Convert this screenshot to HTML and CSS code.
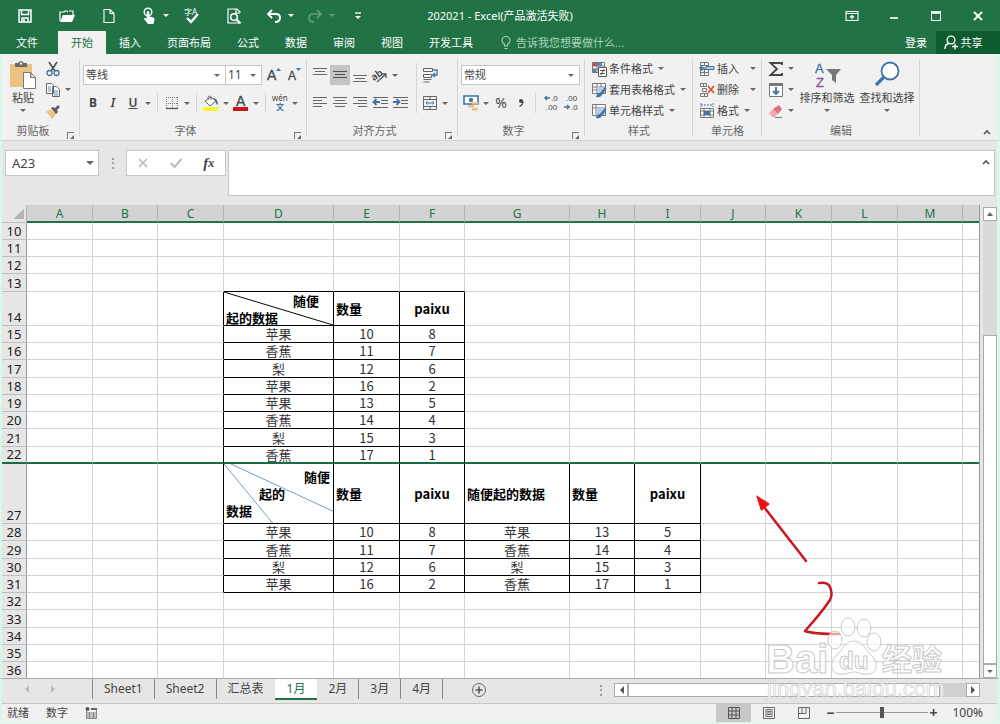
FILE: index.html
```html
<!DOCTYPE html>
<html lang="zh-CN">
<head>
  <meta charset="UTF-8">
  <meta name="viewport" content="width=device-width, initial-scale=1.0">
  <title>202021 - Excel</title>
  <link rel="stylesheet" href="styles.css">
</head>
<body>
  <header class="titlebar">
    <div class="quick">
      <button class="q" aria-label="保存"><svg width="16" height="16" viewBox="0 0 16 16"><path d="M2 2h12v12H2z M4.500 2v4.500h7V2 M5 14v-4h6v4 M7 11v3" fill="none" stroke="#fff" stroke-width="1.500"/></svg></button>
      <button class="q" aria-label="打开"><svg width="18" height="16" viewBox="0 0 18 16"><path d="M2 13V4h4l1-1h2l1 1M11 3h4v4" fill="none" stroke="#fff" stroke-width="1.200"/><path d="M2 14l3-7h12l-3 7z" fill="#fff"/></svg></button>
      <button class="q" aria-label="新建"><svg width="14" height="16" viewBox="0 0 14 16"><path d="M2 1.500h6l4 4v9H2z M8 1.500v4h4" fill="none" stroke="#fff" stroke-width="1.100"/></svg></button>
      <button class="q split" aria-label="触摸模式"><svg width="14" height="18" viewBox="0 0 14 18"><circle cx="6" cy="5" r="3.800" fill="none" stroke="#fff" stroke-width="1.400"/><path d="M4.700 5q1.300-2 2.600 0v4.500l4 1q1.700.500 1.200 2.500l-1 4H6l-4-5q0-1.500 1.500-1L4.700 12z" fill="#fff"/></svg></button>
      <button class="drop light" aria-label="更多"></button>
      <button class="q" aria-label="拼写检查"><svg width="18" height="18" viewBox="0 0 18 18"><text x="1" y="8" class="mini white">字A</text><path d="M4 11l4 4 7-8" fill="none" stroke="#fff" stroke-width="2.400"/></svg></button>
      <button class="q" aria-label="打印预览"><svg width="16" height="18" viewBox="0 0 16 18"><path d="M14 6V5l-3-3H2v14h11M10 2v4h4" fill="none" stroke="#fff" stroke-width="1.200"/><circle cx="8" cy="10" r="3.300" fill="none" stroke="#fff" stroke-width="1.500"/><path d="M10.500 12.500l4 4" stroke="#fff" stroke-width="2.200"/></svg></button>
      <button class="q split" aria-label="撤消"><svg width="16" height="14" viewBox="0 0 16 14"><path d="M2 5h8q4 0 4 4t-5 4M6 1L2 5l4 4" fill="none" stroke="#fff" stroke-width="1.900"/></svg></button>
      <button class="drop light" aria-label="撤消列表"></button>
      <button class="q split faded" aria-label="恢复"><svg width="16" height="14" viewBox="0 0 16 14"><path d="M14 5H6q-4 0-4 4t5 4M10 1l4 4-4 4" fill="none" stroke="#fff" stroke-width="1.700"/></svg></button>
      <button class="drop light faded" aria-label="恢复列表"></button>
      <button class="q" aria-label="自定义"><svg width="8" height="8" viewBox="0 0 8 8"><path d="M1 1h6" stroke="#fff" stroke-width="1.300"/><path d="M1 4h6L4 7z" fill="#fff"/></svg></button>
    </div>
    <h1 class="doc-name">202021 - Excel(产品激活失败)</h1>
    <div class="window-buttons">
      <button class="q" aria-label="功能区选项"><svg width="14" height="12" viewBox="0 0 14 12"><path d="M1 1.500h12v9H1zM1 3.500h12M7 9.500v-4M5 7.500l2-2 2 2" fill="none" stroke="#fff" stroke-width="1.100"/></svg></button>
      <button class="q" aria-label="最小化"><svg width="10" height="12" viewBox="0 0 10 12"><path d="M1 8h8" stroke="#fff" stroke-width="1.700"/></svg></button>
      <button class="q" aria-label="最大化"><svg width="10" height="12" viewBox="0 0 10 12"><path d="M.500 2h9v8.500h-9z" fill="none" stroke="#fff"/><path d="M0 2.500h10" stroke="#fff" stroke-width="2.500"/></svg></button>
      <button class="q" aria-label="关闭"><svg width="10" height="12" viewBox="0 0 10 12"><path d="M1 2l8 8M9 2l-8 8" stroke="#fff" stroke-width="1.900"/></svg></button>
    </div>
  </header>

  <nav class="tabs">
    <button class="tab file">文件</button>
    <button class="tab active">开始</button>
    <button class="tab">插入</button>
    <button class="tab">页面布局</button>
    <button class="tab">公式</button>
    <button class="tab">数据</button>
    <button class="tab">审阅</button>
    <button class="tab">视图</button>
    <button class="tab">开发工具</button>
    <button class="tell"><svg width="10" height="14" viewBox="0 0 10 14"><path d="M3.500 10V8.500Q1 6.500 1 4.500a4 4 0 0 1 8 0q0 2-2.500 4V10zM3.500 12.500h3" fill="none" stroke="#a9d3ba" stroke-width="1.100"/></svg>告诉我您想要做什么...</button>
    <button class="login">登录</button>
    <button class="share"><svg width="14" height="15" viewBox="0 0 14 15"><circle cx="7" cy="5" r="3.900" fill="none" stroke="#fff" stroke-width="1.300"/><path d="M1 14q0-5 4-5.500M11 8.500v6M8 11.500h6" fill="none" stroke="#fff" stroke-width="1.300"/></svg>共享</button>
  </nav>

  <section class="ribbon">
    <div class="group clipboard">
      <div class="group-body">
        <button class="big paste">
          <svg width="28" height="30" viewBox="0 0 28 30"><path d="M1 4h22v23H1z" fill="#eac282"/><path d="M6 3h3q3-4 6 0h3v4H6z" fill="#6b6b6b"/><circle cx="12" cy="3.500" r="1.200" fill="#f1f1f1"/><path d="M14.500 12.500h7l5 5v11h-12zM21.500 12.500v5h5" fill="#fff" stroke="#777"/></svg>
          <span>粘贴</span><i class="caret"></i>
        </button>
        <div class="stack">
          <button class="line" aria-label="剪切"><svg width="16" height="16" viewBox="0 0 16 16"><path d="M4 1l6 9M12 1L6 10" stroke="#555" stroke-width="1.700"/><circle cx="4.500" cy="12" r="2.500" fill="none" stroke="#3f74a8" stroke-width="1.300"/><circle cx="11.500" cy="12" r="2.500" fill="none" stroke="#3f74a8" stroke-width="1.300"/></svg></button>
          <button class="line" aria-label="复制"><svg width="16" height="16" viewBox="0 0 16 16"><path d="M1.500 1.500h5l2 2v8h-7zM7.500 4.500h4l3 3v7h-7z" fill="#fff" stroke="#666"/><path d="M3 5h3M3 7h3M3 9h3M9 9h4M9 11h4M9 13h4" stroke="#5f8fbd"/></svg><i class="caret"></i></button>
          <button class="line" aria-label="格式刷"><svg width="16" height="16" viewBox="0 0 16 16"><path d="M1 9l5-3 5 5-4 5q-2-4-6-7z" fill="#eac282"/><path d="M6 5l5 6 2-2-1-2 3-3-2-2-3 3-2-1z" fill="#5f5f5f"/></svg></button>
        </div>
      </div>
      <div class="group-name">剪贴板<button class="launch" aria-label="剪贴板设置"></button></div>
    </div>

    <div class="group font">
      <div class="group-body rows">
        <div class="tool-row">
          <label class="combo font-name"><select aria-label="字体"><option>等线</option></select></label>
          <label class="combo font-size"><select aria-label="字号"><option>11</option></select></label>
          <button class="tool" aria-label="增大字号"><svg width="16" height="16" viewBox="0 0 16 16"><text x="1" y="13" class="letter big-a">A</text><path d="M10 4h5l-2.500-3z" fill="#3f74a8"/></svg></button>
          <button class="tool" aria-label="减小字号"><svg width="16" height="16" viewBox="0 0 16 16"><text x="2" y="13" class="letter small-a">A</text><path d="M10 1h5l-2.500 3z" fill="#3f74a8"/></svg></button>
        </div>
        <div class="tool-row">
          <button class="tool bold">B</button>
          <button class="tool italic">I</button>
          <button class="tool under">U</button>
          <button class="drop" aria-label="下划线"></button>
          <span class="sep"></span>
          <button class="tool" aria-label="边框"><svg width="14" height="14" viewBox="0 0 14 14"><path d="M1.500 1v12M7.500 1v12M12.500 1v12M1 1.500h12M1 7.500h12" stroke="#777" stroke-dasharray="1 1"/><path d="M1 12.500h12" stroke="#555" stroke-width="1.300"/></svg></button>
          <button class="drop" aria-label="边框列表"></button>
          <span class="sep"></span>
          <button class="tool" aria-label="填充颜色"><svg width="16" height="16" viewBox="0 0 16 16"><path d="M2 6l6-4 5 4-6 5zM5 5V2q2-2 3 0v3" fill="#fff" stroke="#666"/><path d="M10 3q5 0 5 7-2-1-3-4z" fill="#3f74a8"/><path d="M0 12h15v4H0z" fill="#f7f431"/></svg></button>
          <button class="drop" aria-label="填充列表"></button>
          <button class="tool" aria-label="字体颜色"><svg width="16" height="16" viewBox="0 0 16 16"><text x="3" y="11" class="letter big-a">A</text><path d="M0 12h15v4H0z" fill="#c8171e"/></svg></button>
          <button class="drop" aria-label="颜色列表"></button>
          <span class="sep"></span>
          <button class="tool" aria-label="拼音"><svg width="18" height="18" viewBox="0 0 18 18"><text x="1" y="7" class="mini">wén</text><text x="5" y="16" class="mini blue">文</text></svg></button>
          <button class="drop" aria-label="拼音列表"></button>
        </div>
      </div>
      <div class="group-name">字体<button class="launch" aria-label="字体设置"></button></div>
    </div>

    <div class="group align">
      <div class="group-body">
        <div class="rows">
          <div class="tool-row">
            <button class="tool" aria-label="顶端对齐"><svg width="14" height="14" viewBox="0 0 14 14"><path d="M0 .500h14M2 3.500h10M0 6.500h14" stroke="#666"/></svg></button>
            <button class="tool on" aria-label="垂直居中"><svg width="14" height="14" viewBox="0 0 14 14"><path d="M0 3.500h14M2 6.500h10M0 9.500h14" stroke="#555"/></svg></button>
            <button class="tool" aria-label="底端对齐"><svg width="14" height="14" viewBox="0 0 14 14"><path d="M0 7.500h14M2 10.500h10M0 13.500h14" stroke="#666"/></svg></button>
            <button class="tool" aria-label="方向"><svg width="16" height="16" viewBox="0 0 16 16"><text x="0" y="11" class="mini slant">ab</text><path d="M5 15l9-8M10 7h4v4" fill="none" stroke="#555" stroke-width="1.300"/></svg></button>
            <button class="drop" aria-label="方向列表"></button>
          </div>
          <div class="tool-row">
            <button class="tool" aria-label="左对齐"><svg width="14" height="14" viewBox="0 0 14 14"><path d="M0 1.500h14M0 4.500h9M0 7.500h14M0 10.500h9" stroke="#666"/></svg></button>
            <button class="tool" aria-label="居中"><svg width="14" height="14" viewBox="0 0 14 14"><path d="M0 1.500h14M2 4.500h10M0 7.500h14M2 10.500h10" stroke="#666"/></svg></button>
            <button class="tool" aria-label="右对齐"><svg width="14" height="14" viewBox="0 0 14 14"><path d="M0 1.500h14M5 4.500h9M0 7.500h14M5 10.500h9" stroke="#666"/></svg></button>
            <button class="tool" aria-label="减少缩进"><svg width="16" height="14" viewBox="0 0 16 14"><path d="M1 1.500h15M9 4.500h7M9 7.500h7M1 11.500h15" stroke="#666"/><path d="M8 6H2M4.500 3L1.500 6l3 3" fill="none" stroke="#3f74a8" stroke-width="1.800"/></svg></button>
            <button class="tool" aria-label="增加缩进"><svg width="16" height="14" viewBox="0 0 16 14"><path d="M1 1.500h15M9 4.500h7M9 7.500h7M1 11.500h15" stroke="#666"/><path d="M1 6h6M4.500 3l3 3-3 3" fill="none" stroke="#3f74a8" stroke-width="1.800"/></svg></button>
          </div>
        </div>
        <span class="sep tall"></span>
        <div class="rows">
          <div class="tool-row">
            <button class="tool" aria-label="自动换行"><svg width="16" height="16" viewBox="0 0 16 16"><path d="M1.500 1.500h9v3h-9zM1.500 7.500h8v3h-8zM1.500 12.500h8M1.500 15h6" fill="none" stroke="#666"/><path d="M10 3h5v5h-4M13 6l-2.500 2 2.500 2" fill="none" stroke="#3f74a8" stroke-width="1.300"/></svg></button>
          </div>
          <div class="tool-row">
            <button class="tool" aria-label="合并后居中"><svg width="16" height="14" viewBox="0 0 16 14"><path d="M1.500 .500h13v13h-13zM1 3.500h14M1 10.500h14M8 0v4M8 10v4" fill="none" stroke="#666"/><path d="M4 7h8M5.500 5.500L4 7l1.500 1.500M10.500 5.500L12 7l-1.500 1.500" fill="none" stroke="#3f74a8"/></svg></button>
            <button class="drop" aria-label="合并列表"></button>
          </div>
        </div>
      </div>
      <div class="group-name">对齐方式<button class="launch" aria-label="对齐设置"></button></div>
    </div>

    <div class="group number">
      <div class="group-body rows">
        <div class="tool-row">
          <label class="combo format"><select aria-label="数字格式"><option>常规</option></select></label>
        </div>
        <div class="tool-row">
          <button class="tool" aria-label="会计格式"><svg width="16" height="16" viewBox="0 0 16 16"><path d="M1 1h14v8H1z" fill="#fff" stroke="#3f74a8" stroke-width="1.600"/><circle cx="8" cy="5" r="2.200" fill="#3f74a8"/><path d="M9 7h6v2.500H9zM5 10h6v2.500H5zM9 13h6v2.500H9z" fill="#eac282"/></svg></button>
          <button class="drop" aria-label="会计列表"></button>
          <button class="tool percent">%</button>
          <button class="tool comma" aria-label="千位分隔"><svg width="8" height="10" viewBox="0 0 8 10"><circle cx="4" cy="3" r="2" fill="#444"/><path d="M6 3q0 4-3.500 5.500" fill="none" stroke="#444" stroke-width="1.300"/></svg></button>
          <span class="sep"></span>
          <button class="tool" aria-label="增加小数位"><svg width="16" height="18" viewBox="0 0 16 18"><path d="M8 4H3M5 2L3 4l2 2" fill="none" stroke="#3f74a8" stroke-width="1.400"/><text x="9" y="7" class="mini digits">.0</text><text x="4" y="16" class="mini digits">.00</text></svg></button>
          <button class="tool" aria-label="减少小数位"><svg width="16" height="18" viewBox="0 0 16 18"><text x="4" y="7" class="mini digits">.00</text><path d="M2 13h6M5 11l2 2-2 2" fill="none" stroke="#3f74a8" stroke-width="1.400"/><text x="9" y="16" class="mini digits">.0</text></svg></button>
        </div>
      </div>
      <div class="group-name">数字<button class="launch" aria-label="数字设置"></button></div>
    </div>

    <div class="group styles">
      <div class="group-body">
        <div class="stack">
          <button class="line"><svg width="16" height="16" viewBox="0 0 16 16"><path d="M1.500 1.500h12v10h-12zM1 5h13M1 8h13M6 1v11" fill="#fff" stroke="#777"/><path d="M2 2h4v3H2z" fill="#c0504d"/><path d="M6 2h5v3H6zM2 8h3v3H2z" fill="#5a86b5"/><path d="M7.500 6.500h8v9h-8zM9 9.500h5M9 12.500h5M13 8l-3 6" fill="#fff" stroke="#555"/></svg>条件格式<i class="caret"></i></button>
          <button class="line"><svg width="16" height="16" viewBox="0 0 16 16"><path d="M1.500 1.500h13v10h-13zM1 5h14M1 8h14M6 1v11M10 1v11" fill="#fff" stroke="#777"/><path d="M6 5h8v6H6z" fill="#b5cce2"/><path d="M5 15q1-4 4-4l5-6 1.500 1.500L11 13q-2 3-6 2z" fill="#3f74a8"/></svg>套用表格格式<i class="caret"></i></button>
          <button class="line"><svg width="16" height="16" viewBox="0 0 16 16"><path d="M1.500 1.500h13v11h-13zM1 5h14M5 1v12" fill="#fff" stroke="#777"/><path d="M5 5h9v7H5z" fill="#b5cce2"/><path d="M5 15q1-4 4-4l5-6 1.500 1.500L11 13q-2 3-6 2z" fill="#3f74a8"/></svg>单元格样式<i class="caret"></i></button>
        </div>
      </div>
      <div class="group-name plain">样式</div>
    </div>

    <div class="group cells">
      <div class="group-body">
        <div class="stack">
          <button class="line"><svg width="16" height="16" viewBox="0 0 16 16"><path d="M1.500 1.500h8v3h-8zM5.500 1v3M1.500 11.500h8v3h-8zM1.500 8.500h8M5.500 8v7M1.500 8v4M9.500 9v3" fill="none" stroke="#777"/><path d="M7 5.500h8v3H7z" fill="#b5cce2" stroke="#3f74a8"/><path d="M6 7H1M3.500 4.500L1 7l2.500 2.500" fill="none" stroke="#3f74a8" stroke-width="1.400"/></svg>插入<i class="caret far"></i></button>
          <button class="line"><svg width="16" height="16" viewBox="0 0 16 16"><path d="M1.500 1.500h6v3h-6zM4.500 1v3M1.500 11.500h7v3h-7zM5.500 11v4M3.500 6.500h4v3h-4z" fill="none" stroke="#777"/><path d="M9 4l6 7M15 4l-6 7" stroke="#d2563c" stroke-width="1.800"/></svg>删除<i class="caret far"></i></button>
          <button class="line"><svg width="16" height="16" viewBox="0 0 16 16"><path d="M2 2h12M2 0v4M14 0v4" stroke="#3f74a8" stroke-dasharray="2 1"/><path d="M1.500 5.500h13v9h-13zM1 8h14M1 12h14M5 5v10M11 5v10" fill="#fff" stroke="#777"/><path d="M5 8h6v4H5z" fill="#3f74a8"/></svg>格式<i class="caret"></i></button>
        </div>
      </div>
      <div class="group-name plain">单元格</div>
    </div>

    <div class="group editing">
      <div class="group-body">
        <div class="stack">
          <button class="line" aria-label="求和"><svg width="16" height="16" viewBox="0 0 16 16"><path d="M14 4V2H2.500L9 8l-6.500 6H14v-2" fill="none" stroke="#444" stroke-width="1.800"/></svg><i class="caret"></i></button>
          <button class="line" aria-label="填充"><svg width="16" height="16" viewBox="0 0 16 16"><path d="M1.500 1.500h13v13h-13z" fill="#fff" stroke="#777"/><path d="M1 1h14v3H1z" fill="#777"/><path d="M8 5v7M5 9l3 3 3-3" fill="none" stroke="#3f74a8" stroke-width="1.800"/></svg><i class="caret"></i></button>
          <button class="line" aria-label="清除"><svg width="16" height="16" viewBox="0 0 16 16"><path d="M1 10l4-4 5 5-3 3H4z" fill="#f0a9b4"/><path d="M5 6l6-4 3 4-4 5z" fill="#dd6f80"/><path d="M7 14.500h7" stroke="#777"/></svg><i class="caret"></i></button>
        </div>
        <button class="big"><svg width="30" height="30" viewBox="0 0 30 30"><text x="3" y="13" class="letter sort-a">A</text><text x="4" y="27" class="letter sort-z">Z</text><path d="M14 9h15l-5 6v8l-4-3v-5z" fill="#777"/></svg><span>排序和筛选</span><i class="caret"></i></button>
        <button class="big"><svg width="30" height="30" viewBox="0 0 30 30"><circle cx="18" cy="11" r="8.500" fill="#fff" stroke="#3f74a8" stroke-width="1.800"/><path d="M11.500 17.500L4 25" stroke="#3f74a8" stroke-width="3.200"/></svg><span>查找和选择</span><i class="caret"></i></button>
      </div>
      <div class="group-name plain">编辑</div>
    </div>
    <button class="collapse" aria-label="折叠功能区"><svg width="8" height="6" viewBox="0 0 8 6"><path d="M1 5l3-3 3 3" fill="none" stroke="#555" stroke-width="1.600"/></svg></button>
  </section>

  <section class="formula">
    <div class="name-box"><input type="text" value="A23" aria-label="名称框"><button class="drop" aria-label="名称列表"></button></div>
    <span class="dots">⋮</span>
    <div class="fx-buttons">
      <button aria-label="取消"><svg width="12" height="12" viewBox="0 0 12 12"><path d="M2 2l8 8M10 2l-8 8" stroke="#bbb" stroke-width="1.600"/></svg></button>
      <button aria-label="输入"><svg width="14" height="12" viewBox="0 0 14 12"><path d="M1.500 6l4 4 7-8" fill="none" stroke="#bbb" stroke-width="2"/></svg></button>
      <button class="fx" aria-label="插入函数">f<small>x</small></button>
    </div>
    <div class="fx-input">
      <textarea aria-label="编辑栏"></textarea>
      <button aria-label="折叠编辑栏"><svg width="8" height="6" viewBox="0 0 8 6"><path d="M1 5l3-3 3 3" fill="none" stroke="#555" stroke-width="1.600"/></svg></button>
    </div>
  </section>

  <main class="sheet">
    <div class="grid">
      <table>
        <colgroup id="cols"></colgroup>
        <thead><tr id="letters"></tr></thead>
        <tbody id="rows"></tbody>
      </table>
    </div>
    <div class="vscroll">
      <button aria-label="向上"><i class="caret up"></i></button>
      <div class="vtrack"><div class="vthumb"></div></div>
      <button aria-label="向下"><i class="caret"></i></button>
    </div>
  </main>

  <footer>
    <div class="sheet-tabs">
      <div class="sheet-nav">
        <button aria-label="上一个"><i class="caret left"></i></button>
        <button aria-label="下一个"><i class="caret right"></i></button>
      </div>
      <button class="stab">Sheet1</button>
      <button class="stab">Sheet2</button>
      <button class="stab">汇总表</button>
      <button class="stab active">1月</button>
      <button class="stab">2月</button>
      <button class="stab">3月</button>
      <button class="stab">4月</button>
      <button class="add" aria-label="新工作表"><svg width="16" height="16" viewBox="0 0 16 16"><circle cx="8" cy="8" r="6.500" fill="none" stroke="#666"/><path d="M8 4.500v7M4.500 8h7" stroke="#555" stroke-width="1.600"/></svg></button>
      <span class="dots grip">⋮</span>
      <div class="hscroll">
        <button aria-label="向左"><i class="caret left"></i></button>
        <div class="htrack"><div class="hthumb"></div></div>
        <button aria-label="向右"><i class="caret right"></i></button>
      </div>
    </div>
    <div class="status">
      <span>就绪</span>
      <span>数字</span>
      <svg width="12" height="12" viewBox="0 0 12 12"><path d="M1.500 4v7.500h10v-10H6M2 6h9M2 8h9M2 10h9M4.500 5v6M8.500 5v6" fill="none" stroke="#888"/><circle cx="2.500" cy="2" r="2" fill="#555"/><path d="M6 1h6v2H6z" fill="#666"/></svg>
      <div class="views">
        <button class="on" aria-label="普通"><svg width="14" height="12" viewBox="0 0 14 12"><path d="M1.500.500h11v11h-11zM1 4h12M1 8h12M5 0v12M9 0v12" fill="none" stroke="#555"/></svg></button>
        <button aria-label="页面布局视图"><svg width="14" height="12" viewBox="0 0 14 12"><path d="M1.500.500h11v11h-11zM4 2.500h6v7H4zM5 4.500h4M5 6h4M5 7.500h4" fill="none" stroke="#666"/></svg></button>
        <button aria-label="分页预览"><svg width="14" height="12" viewBox="0 0 14 12"><path d="M1.500.500h11v11h-11zM5 0v6.500H1M9 0v6.500H5" fill="none" stroke="#666"/></svg></button>
      </div>
      <button class="zoom-step">−</button>
      <input class="zoom" type="range" min="0" max="200" value="100" aria-label="缩放">
      <button class="zoom-step">+</button>
      <button class="zoom-value">100%</button>
    </div>
  </footer>

  <svg class="marks" width="260" height="244" viewBox="0 0 260 244">
    <g fill="none" stroke="#c8191e" stroke-width="2.500" stroke-linecap="round" stroke-linejoin="round">
      <path d="M66 81L24 27"/>
      <path d="M79 103q9-1 11 4 3 7 0 13-8 12-25 31 8 3 34 3"/>
    </g>
    <path d="M16 15l14 9-9 7z" fill="#ee1111"/>
    <g class="watermark">
      <ellipse cx="95" cy="160" rx="7" ry="9"/>
      <ellipse cx="108" cy="147" rx="7" ry="9"/>
      <ellipse cx="124" cy="148" rx="7" ry="9"/>
      <ellipse cx="134" cy="162" rx="7" ry="9"/>
      <path d="M114 161c9 0 11 9 17 14 7 6 8 18-3 19-7 1-9-2-14-2s-8 3-15 2c-9-1-9-12-3-18 7-6 9-15 18-15z"/>
      <text x="26" y="193" class="wm-big">Bai</text>
      <text x="99" y="189" class="wm-du">du</text>
      <text x="142" y="190" class="wm-cjk">经验</text>
      <text x="27" y="216" class="wm-url">jingyan.baidu.com</text>
    </g>
  </svg>

  <script>
    const letters = ["A", "B", "C", "D", "E", "F", "G", "H", "I", "J", "K", "L", "M", ""];
    const widths = [25, 66, 65, 66, 110, 66, 65, 105, 65, 66, 65, 66, 66, 65];
    const rowNumbers = [10, 11, 12, 13, 14, 15, 16, 17, 18, 19, 20, 21, 22, 27, 28, 29, 30, 31, 32, 33, 34, 35, 36];

    // values start at column D
    const data = {
      14: ["", "数量", "paixu"],
      15: ["苹果", 10, 8],
      16: ["香蕉", 11, 7],
      17: ["梨", 12, 6],
      18: ["苹果", 16, 2],
      19: ["苹果", 13, 5],
      20: ["香蕉", 14, 4],
      21: ["梨", 15, 3],
      22: ["香蕉", 17, 1],
      27: ["", "数量", "paixu", "随便起的数据", "数量", "paixu"],
      28: ["苹果", 10, 8, "苹果", 13, 5],
      29: ["香蕉", 11, 7, "香蕉", 14, 4],
      30: ["梨", 12, 6, "梨", 15, 3],
      31: ["苹果", 16, 2, "香蕉", 17, 1]
    };

    // header cells split by diagonal lines
    const split = {
      14: `<div class="split-cell two"><svg viewBox="0 0 110 34" preserveAspectRatio="none"><path d="M0 0L110 34" stroke="#000"/></svg>
        <p class="top">随便</p><p>起的数据</p></div>`,
      27: `<div class="split-cell three"><svg viewBox="0 0 110 60" preserveAspectRatio="none"><path d="M0 0L49 60M7 0L110 48" stroke="#6f9dbd"/></svg>
        <p class="top">随便</p><p class="mid">起的</p><p>数据</p></div>`
    };

    document.getElementById("cols").innerHTML =
      widths.map(w => `<col style="width:${w}px">`).join("") + "<col>";
    document.getElementById("letters").innerHTML =
      `<th class="corner"></th>` + letters.map(l => `<th>${l}</th>`).join("");

    document.getElementById("rows").innerHTML = rowNumbers.map(n => {
      const values = data[n] || [];
      const cells = letters.map((l, i) => {
        const v = values[i - 3];
        if (v === undefined) {
          return n === 13 && i > 2 && i < 6 ? `<td class="above"></td>` : "<td></td>";
        }
        const left = typeof v === "string" && (v === "数量" || v.length > 5);
        return `<td class="box${left ? " left" : ""}">${v === "" ? split[n] : v}</td>`;
      }).join("");
      return `<tr class="r${n}"><th>${n}</th>${cells}</tr>`;
    }).join("");
  </script>
</body>
</html>
```
FILE: styles.css
```css
* { box-sizing: border-box; }
body {
  margin: 0;
  height: 100vh;
  display: flex;
  flex-direction: column;
  position: relative;
  overflow: hidden;
  background: #e6e6e6;
  color: #444;
  font: 11px/16px "Noto Sans", "Noto Sans CJK SC", sans-serif;
}
button, input, select, textarea { font: inherit; color: inherit; border: 0; padding: 0; margin: 0; background: none; border-radius: 0; outline: none; }
button { display: flex; align-items: center; justify-content: center; white-space: nowrap; }
svg { display: block; flex: none; overflow: visible; }

.caret, .drop::after, .combo::after {
  content: "";
  flex: none;
  border: 3px solid transparent;
  border-top-color: #666;
  border-bottom: 0;
}
.caret.up { border-bottom: 4px solid #666; border-top: 0; }
.caret.left { border: 4px solid transparent; border-right-color: #555; border-left: 0; }
.caret.right { border: 4px solid transparent; border-left-color: #555; border-right: 0; }
.drop { width: 10px; height: 20px; flex: none; }
.drop.light::after { border-top-color: #fff; }
.faded { opacity: 0.3; }

/* title bar */
.titlebar { display: grid; grid-template-columns: 1fr auto 1fr; height: 31px; background: #217346; color: #fff; }
.quick { display: flex; align-items: center; padding-left: 4px; }
.q { width: 42px; height: 31px; flex: none; }
.q.split { width: 24px; margin-left: 7px; }
.doc-name { margin: 0; font-size: 11px; font-weight: 400; line-height: 31px; white-space: nowrap; }
.window-buttons { display: flex; justify-content: flex-end; padding-right: 1px; }

.tabs { display: flex; height: 23px; background: #217346; color: #fff; }
.tab { padding: 0 13px; }
.tab.file { padding: 0 16px; margin-right: 4px; }
.tab.active { background: #f1f1f1; color: #217346; }
.tell { color: #a9d3ba; gap: 5px; padding-left: 15px; margin-right: auto; }
.login { padding: 0 9px; }
.share { width: 64px; gap: 3px; padding-right: 10px; background: #0f5c31; }

/* ribbon */
.ribbon { display: flex; height: 87px; flex: none; background: #f1f1f1; border-bottom: 1px solid #d2d2d2; border-left: 2px solid #dcf7e8; border-right: 3px solid #dcf7e8; }
.group { display: flex; flex-direction: column; flex: none; padding: 4px 3px 0; position: relative; }
.group::after { content: ""; position: absolute; right: 0; top: 5px; bottom: 4px; border-right: 1px solid #d4d4d4; }
.group-body { display: flex; height: 64px; }
.group-name { display: flex; justify-content: center; align-items: center; height: 18px; color: #666; padding-right: 16px; position: relative; }
.group-name.plain { padding-right: 0; }
.launch { position: absolute; right: 3px; bottom: 1px; width: 7px; height: 7px; border-left: 1px solid #777; border-top: 1px solid #777; }
.launch::after { content: ""; margin: 2px 0 0 2px; border: 2px solid transparent; border-right-color: #666; border-bottom-color: #666; }
.clipboard { width: 78px; }
.font { width: 227px; }
.align { width: 151px; }
.number { width: 127px; }
.styles { width: 108px; }
.cells { width: 69px; }
.editing { width: 158px; }

.rows { display: flex; flex-direction: column; gap: 8px; padding-top: 7px; }
.tool-row { display: flex; height: 20px; align-items: center; }
.tool { width: 20px; height: 20px; flex: none; }
.tool.on { background: #c5c5c5; }
.bold { font-weight: 700; font-size: 12px; }
.italic { font-size: 12px; font-weight: 600; font-style: italic; }
.under { font-weight: 600; font-size: 12px; text-decoration: underline; }
.percent { font-size: 14px; }
.sep { width: 1px; height: 20px; margin: 0 4px; background: #d4d4d4; flex: none; }
.sep.tall { height: 50px; margin: 5px 3px 0 6px; }
.combo { display: flex; align-items: center; height: 20px; padding-right: 5px; border: 1px solid #c6c6c6; background: #fff; }
.combo select { flex: 1; min-width: 0; height: 18px; padding-left: 2px; appearance: none; }
.font-name { width: 143px; }
.font-size { width: 37px; margin: 0 2px 0 -1px; }
.font-size select { font-size: 12px; }
.format { width: 119px; }

.stack { display: flex; flex-direction: column; flex: none; }
.line { height: 21px; justify-content: flex-start; gap: 4px; padding-left: 3px; }
.styles .line, .cells .line { gap: 2px; }
.styles .caret, .cells .caret { margin-left: 3px; }
.cells .caret.far { margin-left: 9px; }
.big { flex-direction: column; justify-content: flex-start; align-items: center; height: 60px; padding-top: 2px; }
.big span { line-height: 16px; }
.big .caret { margin-top: 3px; }
.paste { width: 36px; }
.editing .stack { width: 32px; }
.editing .big { width: 60px; }
.clipboard .line { padding-left: 4px; }
.collapse { margin: 72px 6px 0 auto; height: 12px; }

.letter { font: 14px "Liberation Sans", sans-serif; fill: #444; stroke: #444; stroke-width: 0.3; }
.small-a { font-size: 12px; }
.sort-a { font-size: 15px; fill: #3f74a8; stroke: #3f74a8; font-size: 13px; }
.sort-z { fill: #8a4fa3; stroke: #8a4fa3; font-size: 13px; }
.mini { font: 8px "Noto Sans", "Noto Sans CJK SC", sans-serif; fill: #444; }
.mini.white { fill: #fff; }
.mini.blue { fill: #3f74a8; font-weight: 700; }
.mini.digits { font-family: "Liberation Sans", sans-serif; }
.mini.slant { font-size: 10px; font-weight: 600; transform: rotate(-35deg); transform-origin: 6px 10px; }

/* formula bar */
.formula { display: flex; align-items: flex-start; height: 64px; flex: none; padding: 9px 2px 0 3px; border-left: 2px solid #dcf7e8; border-right: 3px solid #dcf7e8; }
.name-box { display: flex; align-items: center; width: 94px; height: 26px; padding: 0 3px 0 6px; border: 1px solid #c6c6c6; background: #fff; font-size: 13px; }
.name-box input { flex: 1; min-width: 0; }
.name-box .drop::after { border-width: 4px 4px 0; }
.dots { width: 27px; line-height: 26px; text-align: center; color: #888; font-size: 14px; }
.fx-buttons { display: flex; width: 100px; height: 26px; border: 1px solid #c6c6c6; background: #fff; }
.fx-buttons button { flex: 1; }
.fx { font: italic 700 15px "Liberation Serif", serif; }
.fx small { font-size: 12px; }
.fx-input { display: flex; align-items: flex-start; flex: 1; height: 46px; margin-left: 2px; border: 1px solid #c6c6c6; background: #fff; }
.fx-input textarea { flex: 1; height: 44px; padding: 4px; resize: none; }
.fx-input button { width: 16px; height: 22px; }

/* sheet */
.sheet { display: flex; flex: 1; min-height: 0; border-left: 2px solid #dcf7e8; border-right: 3px solid #dcf7e8; }
.grid { flex: 1; min-width: 0; overflow: hidden; background: #fff; border-right: 1px solid #999; }
table { width: 100%; table-layout: fixed; border-collapse: separate; border-spacing: 0; font-family: "Noto Sans CJK SC", sans-serif; font-size: 13px; line-height: 16px; }
td, th { height: 17px; padding: 0; white-space: nowrap; text-align: center; border-right: 1px solid #d4d4d4; border-bottom: 1px solid #d4d4d4; }
thead th { height: 18px; padding-top: 1px; font: 12px/15px "Noto Sans", sans-serif; color: #217346; background: #d3d3d3; border-right-color: #b4b4b4; border-bottom: 2px solid #217346; }
thead .corner { background: linear-gradient(135deg, #e6e6e6 50%, #b4b4b4 50%) 12px 4px / 10px 10px no-repeat #e6e6e6; border-bottom: 1px solid #c0c0c0; }
tbody th { background: #e6e6e6; color: #222; font: 13px/16px "Noto Sans", sans-serif; vertical-align: bottom; border-right-color: #999; border-bottom-color: #c0c0c0; }
tr > :last-child { border-right: 0; }
tbody tr:nth-child(4n) > * { height: 18px; }
tbody .r14 > * { height: 34px; }
tbody .r27 > * { height: 60px; }
.box { border-color: #000; color: #333; }
td:has(+ .box) { border-right-color: #000; }
.above { border-bottom-color: #000; }
.left { text-align: left; padding-left: 2px; }
.r22 > * { border-bottom: 2px solid #1d6b46; line-height: 15px; }
.r14 td, .r27 td { font-weight: 700; color: #000; }
.split-cell { position: relative; text-align: left; }
.split-cell svg { position: absolute; inset: 0; width: 100%; height: 100%; overflow: hidden; }
.split-cell p { margin: 0; padding-left: 2px; line-height: 17px; }
.split-cell.two { height: 33px; }
.split-cell.three { height: 59px; padding-top: 4px; }
.split-cell .top { text-align: right; padding-right: 3px; }
.split-cell.two .top { padding-right: 14px; }
.split-cell .mid { padding-left: 35px; }

.vscroll { display: flex; flex-direction: column; width: 14px; margin: 2px 0 0 3px; }
.vscroll button, .hscroll button { width: 14px; height: 14px; flex: none; border: 1px solid #ababab; background: #fff; }
.vtrack { flex: 1; background: #dadada; padding-top: 114px; }
.vthumb { height: 100%; background: #fff; border: 1px solid #ababab; }

/* sheet tabs and status */
.sheet-tabs { display: flex; align-items: flex-start; height: 25px; padding-right: 17px; border-top: 1px solid #ababab; font-size: 12px; border-left: 2px solid #dcf7e8; border-right: 3px solid #dcf7e8; }
.sheet-nav { display: flex; justify-content: space-between; width: 91px; height: 20px; padding: 0 37px 0 23px; border-right: 1px solid #888; opacity: 1; }
.sheet-nav .left { padding: 0; border-right-color: #bbb; }
.sheet-nav .right { border-left-color: #bbb; }
.stab { height: 20px; padding: 0 11px; border-right: 1px solid #888; }
.stab.active { height: 21px; padding: 0 12px; background: #fff; color: #217346; border-right: 0; border-bottom: 2px solid #217346; }
.stab:has(+ .active) { border-right: 0; }
.add { height: 22px; margin-left: 28px; }
.grip { margin-left: auto; line-height: 22px; }
.hscroll { display: flex; width: 366px; margin-top: 4px; }
.htrack { flex: 1; background: #d0d0d0; padding-right: 26px; }
.hthumb { height: 14px; background: #fff; border: 1px solid #ababab; }
.status { display: flex; align-items: center; height: 21px; padding: 0 14px 0 5px; gap: 17px; background: #f1f1f1; border: 0 solid #dcf7e8; border-width: 0 3px 2px 2px; box-shadow: inset 0 1px #c6c6c6; }
.views { display: flex; align-self: stretch; margin-left: auto; }
.views button { width: 35px; }
.views .on { background: #c8c8c8; }
.zoom-step { width: 10px; font-size: 14px; font-weight: 700; margin-left: -13px; }
.zoom { appearance: none; width: 92px; height: 12px; margin: 0 -4px 0 -16px; background: linear-gradient(#999, #999) center / 100% 1px no-repeat; }
.zoom::-webkit-slider-thumb { appearance: none; width: 4px; height: 11px; background: #555; }
.zoom-value { margin-left: -3px; font-size: 12px; }

.marks { position: absolute; right: 0; bottom: 0; pointer-events: none; }
.watermark { fill: #fff; fill-opacity: 0.6; stroke: #c9c9c9; stroke-width: 1; }
.wm-big { font: 700 40px "Liberation Sans", sans-serif; }
.wm-du { font: 700 24px "Liberation Sans", sans-serif; }
.wm-cjk { font: 700 30px "Noto Sans CJK SC", sans-serif; }
.wm-url { font: 22px "Liberation Sans", sans-serif; stroke: #dcdcdc; fill-opacity: 0.95; }
```
